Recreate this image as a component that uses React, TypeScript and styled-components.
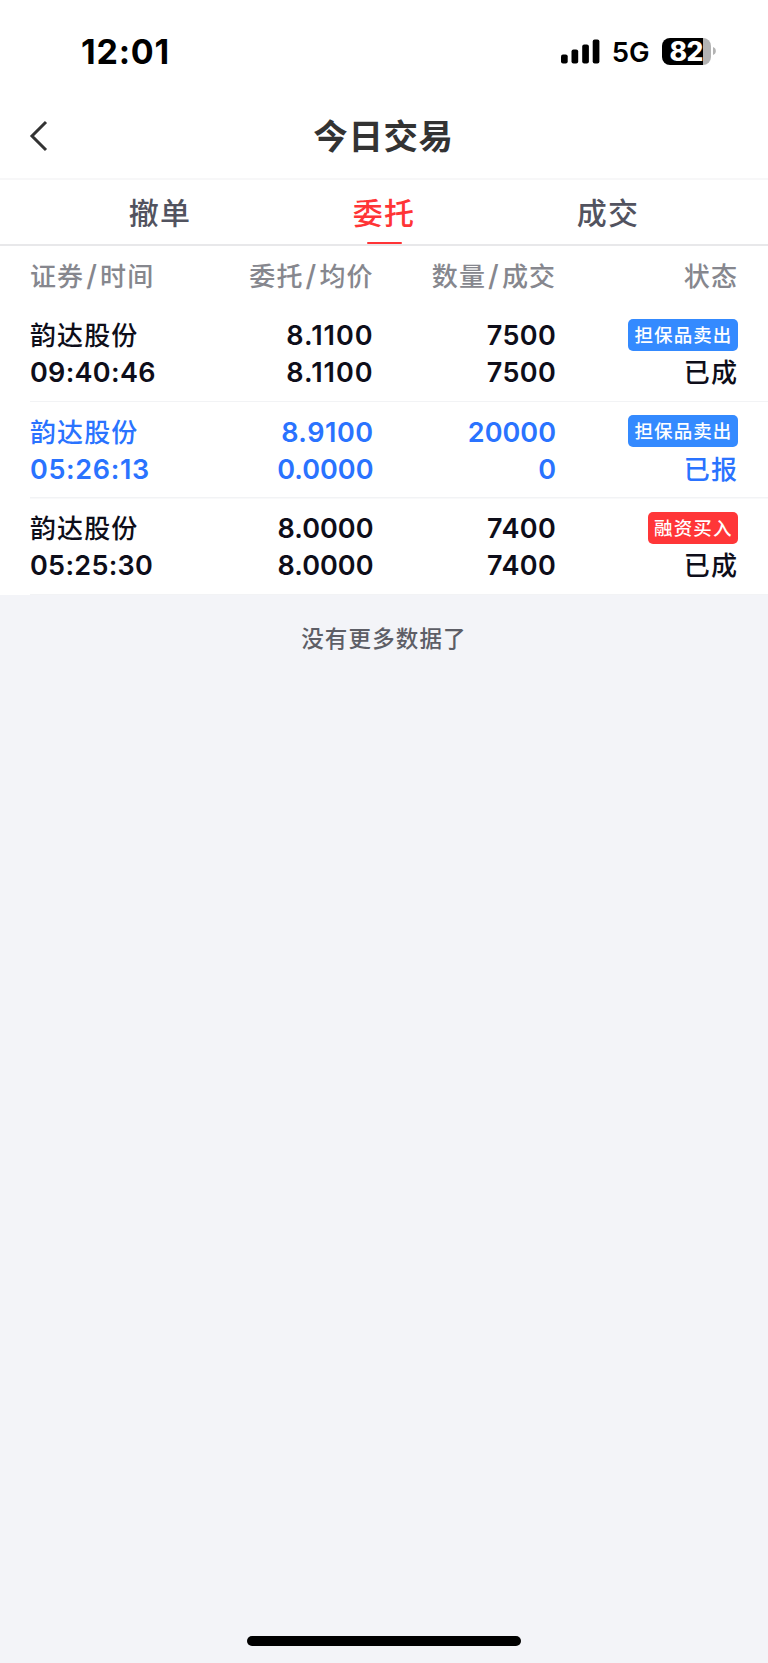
import React from 'react';
import styled, { createGlobalStyle } from 'styled-components';

const GlobalStyle = createGlobalStyle`
  * { box-sizing: border-box; }
  body {
    margin: 0;
    background: #f3f4f8;
    font-family: Inter, 'Noto Sans CJK SC', sans-serif;
  }
`;

const Screen = styled.div`
  width: 768px;
  height: 1663px;
  display: flex;
  flex-direction: column;
  background: #f3f4f8;
  overflow: hidden;
`;

const StatusBar = styled.header`
  height: 102px;
  flex: none;
  display: flex;
  align-items: center;
  padding: 0 52px 0 81px;
  background: #fff;
  color: #000;
`;

const Clock = styled.time`
  font-size: 34px;
  font-weight: 700;
  line-height: 40px;
  letter-spacing: 0.8px;
  margin: 1px auto 0 0;
`;

const Network = styled.span`
  margin: 2px 12.5px 0 12px;
  font-size: 27.5px;
  font-weight: 600;
  line-height: 32px;
  letter-spacing: -0.1px;
`;

const Battery = styled.div`
  width: 49px;
  height: 27px;
  padding-left: 7.5px;
  border-radius: 8px;
  background: linear-gradient(90deg, #000 41px, #b3b3b3 41px);
  color: #fff;
  font-size: 26.5px;
  font-weight: 800;
  line-height: 27px;
  letter-spacing: -0.5px;
`;

const NavBar = styled.nav`
  height: 78px;
  flex: none;
  display: grid;
  grid-template-columns: 80px 1fr 80px;
  align-items: center;
  padding-bottom: 7px;
  background: #fff;
  border-bottom: 2px solid #f7f7f8;
`;

const BackButton = styled.button`
  height: 60px;
  padding: 0 0 1px 29px;
  border: 0;
  background: none;
  display: flex;
  align-items: center;
`;

const Title = styled.h1`
  margin: 0;
  padding-right: 1px;
  text-align: center;
  color: #333;
  font-size: 34.5px;
  font-weight: 700;
  line-height: 50px;
  letter-spacing: 0.6px;
`;

const Tabs = styled.div`
  height: 66px;
  flex: none;
  display: grid;
  grid-template-columns: repeat(3, 224px);
  justify-content: center;
  background: #fff;
  border-bottom: 2px solid #e8e8ea;
`;

const Tab = styled.button<{ $active?: boolean }>`
  padding: 4px 0 0;
  border: 0;
  background: none;
  font-family: inherit;
  font-size: 30px;
  font-weight: 500;
  line-height: 58px;
  letter-spacing: 1.2px;
  color: ${(p) => (p.$active ? '#ff3436' : '#52535f')};
  display: flex;
  flex-direction: column;
  align-items: center;

  &::after {
    content: '';
    width: 35px;
    height: 2.4px;
    border-radius: 2px;
    background: ${(p) => (p.$active ? '#ff3436' : 'transparent')};
  }
`;

const columns = `
  display: grid;
  grid-template-columns: 180px 163.6px 182.5px 181.9px;
  padding: 0 30px;
`;

const TableHead = styled.div`
  ${columns}
  height: 59.7px;
  flex: none;
  background: #fff;
  color: #86878e;
  font-size: 26px;
  font-weight: 500;
  line-height: 62px;
  letter-spacing: 1.1px;
`;

const Slash = styled.span`
  font-size: 29px;
  line-height: 1;
  padding: 0 2px;
`;

const Cell = styled.div<{ $left?: boolean }>`
  display: flex;
  flex-direction: column;
  align-items: ${(p) => (p.$left ? 'flex-start' : 'flex-end')};
  white-space: nowrap;
`;

const OrderRow = styled.div<{ $pending?: boolean }>`
  ${columns}
  height: 96.5px;
  flex: none;
  padding-top: 11.5px;
  background: linear-gradient(#f2f3f5, #f2f3f5) 30px 100% / 100% 1.5px no-repeat #fff;
  color: ${(p) => (p.$pending ? '#2a73ff' : '#0e0e1a')};
`;

const Label = styled.span`
  font-size: 26px;
  font-weight: 500;
  line-height: 37px;
  letter-spacing: 1.1px;
`;

const FigureText = styled.span<{ $tracking: number }>`
  font-size: 27px;
  font-weight: 600;
  line-height: 37px;
  letter-spacing: ${(p) => p.$tracking.toFixed(2)}px;
`;

const BadgeSlot = styled.span`
  height: 37px;
  display: flex;
  align-items: center;
  padding-bottom: 1.5px;
`;

const Badge = styled.span<{ $buy?: boolean }>`
  height: 32px;
  padding: 0 5.5px 0 6px;
  border-radius: 5px;
  background: ${(p) => (p.$buy ? '#ff3638' : '#348aff')};
  color: #fff;
  font-size: 18.5px;
  font-weight: 500;
  line-height: 32px;
  letter-spacing: 1.1px;
`;

const EndNote = styled.p`
  margin: 27px 0 0;
  text-align: center;
  color: #5d5e66;
  font-size: 22.5px;
  font-weight: 500;
  line-height: 34px;
  letter-spacing: 1.15px;
`;

const HomeIndicator = styled.div`
  width: 274px;
  height: 10px;
  flex: none;
  margin: auto auto 17px 247px;
  border-radius: 5px;
  background: #000;
`;

interface Order {
  name: string;
  time: string;
  price: string;
  average: string;
  amount: string;
  filled: string;
  side: string;
  status: string;
  buy?: boolean;
  pending?: boolean;
}

const orders: Order[] = [
  { name: '韵达股份', time: '09:40:46', price: '8.1100', average: '8.1100', amount: '7500', filled: '7500', side: '担保品卖出', status: '已成' },
  { name: '韵达股份', time: '05:26:13', price: '8.9100', average: '0.0000', amount: '20000', filled: '0', side: '担保品卖出', status: '已报', pending: true },
  { name: '韵达股份', time: '05:25:30', price: '8.0000', average: '8.0000', amount: '7400', filled: '7400', side: '融资买入', status: '已成', buy: true },
];

// Extra width in pixels for the glyphs that are narrower than the other digits.
const narrowGlyphs: Record<string, number> = { '1': 2.8, ':': 1, '7': 1.2 };

const Figure = ({ value }: { value: string }) => {
  const extra = [...value].reduce((sum, glyph) => sum + (narrowGlyphs[glyph] ?? 0), 0);
  return <FigureText $tracking={0.05 + extra / value.length}>{value}</FigureText>;
};

const PairHeading = ({ first, second }: { first: string; second: string }) => (
  <span>
    {first}
    <Slash>/</Slash>
    {second}
  </span>
);

const SignalIcon = () => (
  <svg width="39" height="25" viewBox="0 0 39 25">
    <rect x="0" y="15.5" width="6.7" height="9" rx="2" />
    <rect x="10.5" y="10.5" width="6.7" height="14" rx="2" />
    <rect x="21.2" y="5.5" width="6.7" height="19" rx="2" />
    <rect x="31.7" y="0.5" width="6.7" height="24" rx="2" />
  </svg>
);

const BatteryCap = () => (
  <svg width="5" height="10" viewBox="0 0 5 10">
    <path d="M2 1C5.8 2.3 5.8 7.7 2 9Z" fill="#b3b3b3" />
  </svg>
);

const BackIcon = () => (
  <svg width="20" height="32" viewBox="0 0 20 32" fill="none">
    <path d="M17 2L3 16L17 30" stroke="#333" strokeWidth="3" />
  </svg>
);

export default function App() {
  return (
    <Screen>
      <GlobalStyle />
      <StatusBar>
        <Clock>12:01</Clock>
        <SignalIcon />
        <Network>5G</Network>
        <Battery>82</Battery>
        <BatteryCap />
      </StatusBar>
      <NavBar>
        <BackButton aria-label="返回">
          <BackIcon />
        </BackButton>
        <Title>今日交易</Title>
      </NavBar>
      <Tabs>
        <Tab>撤单</Tab>
        <Tab $active>委托</Tab>
        <Tab>成交</Tab>
      </Tabs>
      <TableHead>
        <Cell $left><PairHeading first="证券" second="时间" /></Cell>
        <Cell><PairHeading first="委托" second="均价" /></Cell>
        <Cell><PairHeading first="数量" second="成交" /></Cell>
        <Cell>状态</Cell>
      </TableHead>
      {orders.map((o) => (
        <OrderRow key={o.time} $pending={o.pending}>
          <Cell $left>
            <Label>{o.name}</Label>
            <Figure value={o.time} />
          </Cell>
          <Cell>
            <Figure value={o.price} />
            <Figure value={o.average} />
          </Cell>
          <Cell>
            <Figure value={o.amount} />
            <Figure value={o.filled} />
          </Cell>
          <Cell>
            <BadgeSlot>
              <Badge $buy={o.buy}>{o.side}</Badge>
            </BadgeSlot>
            <Label>{o.status}</Label>
          </Cell>
        </OrderRow>
      ))}
      <EndNote>没有更多数据了</EndNote>
      <HomeIndicator />
    </Screen>
  );
}
